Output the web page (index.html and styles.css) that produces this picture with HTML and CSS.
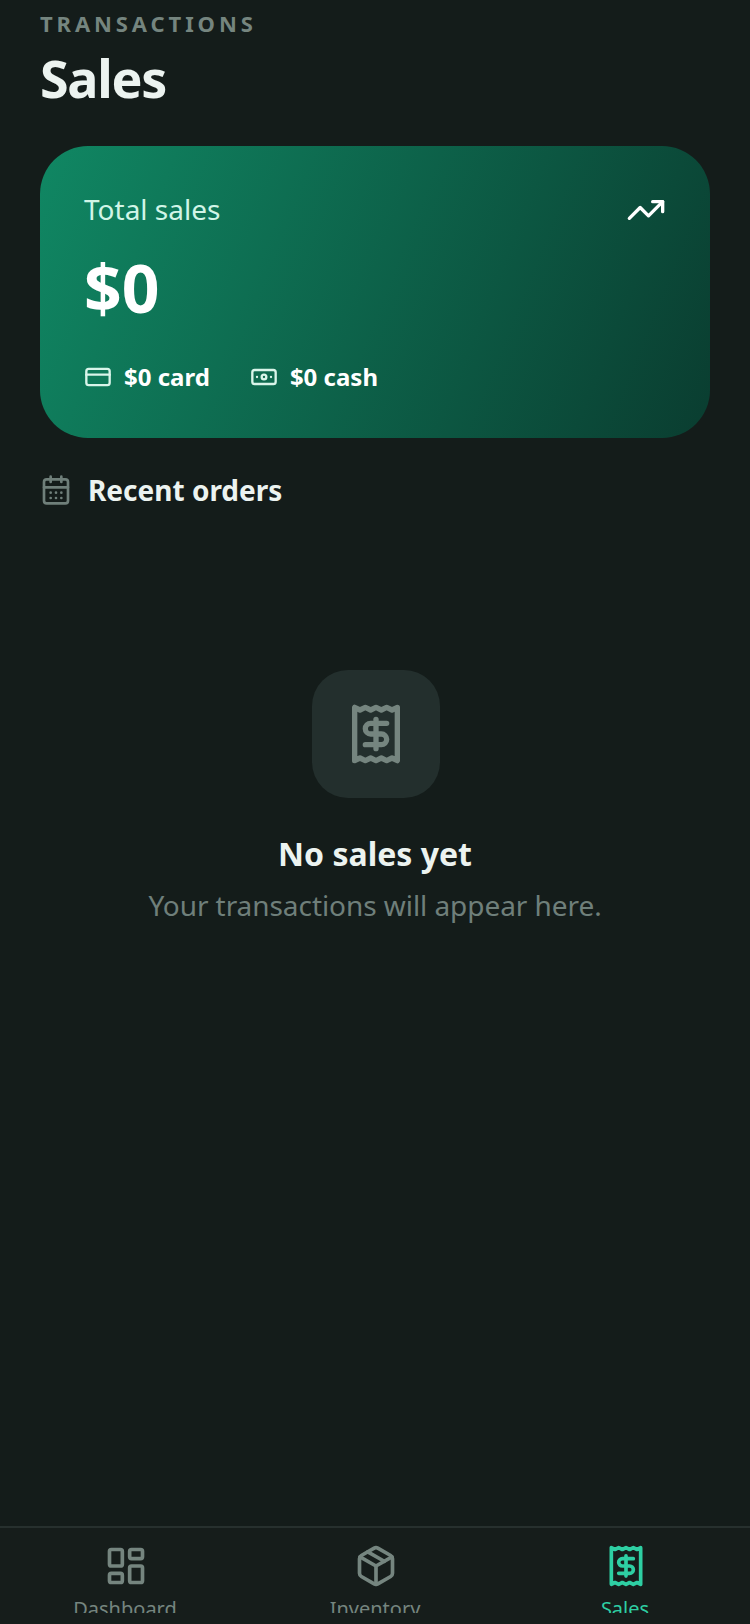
FILE: index.html
```html
<!DOCTYPE html>
<html lang="en">

<head>
    <meta charset="UTF-8">
    <meta name="viewport" content="width=device-width, initial-scale=1.0">
    <title>Sales</title>
    <link rel="stylesheet" href="styles.css">
</head>

<body>
    <div class="screen">
        <main class="content">
            <p class="eyebrow">TRANSACTIONS</p>
            <h1>Sales</h1>

            <section class="total-card">
                <div class="total-top">
                    <span class="total-label">Total sales</span>
                    <svg class="trend-icon" viewBox="0 0 24 24" fill="none" stroke="currentColor" stroke-width="2" stroke-linecap="round" stroke-linejoin="round">
                        <path d="M22 7l-8.500 8.500-5-5L2 17" />
                        <path d="M16 7h6v6" />
                    </svg>
                </div>
                <div class="total-value">$0</div>
                <div class="total-split">
                    <div class="split-item">
                        <svg class="split-icon" viewBox="0 0 24 24" fill="none" stroke="currentColor" stroke-width="2" stroke-linecap="round" stroke-linejoin="round">
                            <rect x="2" y="5" width="20" height="14" rx="2" />
                            <path d="M2 10h20" />
                        </svg>
                        <span>$0 card</span>
                    </div>
                    <div class="split-item">
                        <svg class="split-icon" viewBox="0 0 24 24" fill="none" stroke="currentColor" stroke-width="2" stroke-linecap="round" stroke-linejoin="round">
                            <rect x="2" y="6" width="20" height="12" rx="2" />
                            <circle cx="12" cy="12" r="2" />
                            <path d="M6 12h.01M18 12h.01" />
                        </svg>
                        <span>$0 cash</span>
                    </div>
                </div>
            </section>

            <div class="section-head">
                <svg class="calendar-icon" viewBox="0 0 24 24" fill="none" stroke="currentColor" stroke-width="2" stroke-linecap="round" stroke-linejoin="round">
                    <rect x="3" y="4" width="18" height="18" rx="2" />
                    <path d="M8 2v4M16 2v4M3 10h18" />
                    <path d="M8 14h.01M12 14h.01M16 14h.01M8 18h.01M12 18h.01M16 18h.01" />
                </svg>
                <h2>Recent orders</h2>
            </div>

            <div class="empty">
                <div class="empty-badge">
                    <svg class="receipt-icon" viewBox="0 0 24 24" fill="none" stroke="currentColor" stroke-width="2" stroke-linecap="round" stroke-linejoin="round">
                        <path d="M4 2v20l2-1 2 1 2-1 2 1 2-1 2 1 2-1 2 1V2l-2 1-2-1-2 1-2-1-2 1-2-1-2 1z" />
                        <path d="M16 8h-6a2 2 0 1 0 0 4h4a2 2 0 1 1 0 4H8" />
                        <path d="M12 17.500v-11" />
                    </svg>
                </div>
                <h3>No sales yet</h3>
                <p>Your transactions will appear here.</p>
            </div>
        </main>

        <nav class="tabbar">
            <div class="tab">
                <svg class="tab-icon" viewBox="0 0 24 24" fill="none" stroke="currentColor" stroke-width="2" stroke-linecap="round" stroke-linejoin="round">
                    <rect x="3" y="3" width="7" height="9" rx="1" />
                    <rect x="14" y="3" width="7" height="5" rx="1" />
                    <rect x="14" y="12" width="7" height="9" rx="1" />
                    <rect x="3" y="16" width="7" height="5" rx="1" />
                </svg>
                <span class="tab-label">Dashboard</span>
            </div>
            <div class="tab">
                <svg class="tab-icon" viewBox="0 0 24 24" fill="none" stroke="currentColor" stroke-width="2" stroke-linecap="round" stroke-linejoin="round">
                    <path d="M11 21.730a2 2 0 0 0 2 0l7-4A2 2 0 0 0 21 16V8a2 2 0 0 0-1-1.730l-7-4a2 2 0 0 0-2 0l-7 4A2 2 0 0 0 3 8v8a2 2 0 0 0 1 1.730z" />
                    <path d="M12 22V12" />
                    <path d="M3.290 7L12 12l8.710-5" />
                    <path d="M7.500 4.270l9 5.150" />
                </svg>
                <span class="tab-label">Inventory</span>
            </div>
            <div class="tab active">
                <svg class="tab-icon" viewBox="0 0 24 24" fill="none" stroke="currentColor" stroke-width="2" stroke-linecap="round" stroke-linejoin="round">
                    <path d="M4 2v20l2-1 2 1 2-1 2 1 2-1 2 1 2-1 2 1V2l-2 1-2-1-2 1-2-1-2 1-2-1-2 1z" />
                    <path d="M16 8h-6a2 2 0 1 0 0 4h4a2 2 0 1 1 0 4H8" />
                    <path d="M12 17.500v-11" />
                </svg>
                <span class="tab-label">Sales</span>
            </div>
        </nav>
    </div>
</body>

</html>
```

FILE: styles.css
```css
* {
    margin: 0;
    padding: 0;
    box-sizing: border-box;
    font-family: "Noto Sans", sans-serif;
}

body {
    background: #141c1a;
}

.screen {
    display: flex;
    flex-direction: column;
    width: 750px;
    height: 1624px;
    overflow: hidden;
}

.content {
    flex: 1;
    min-height: 0;
    padding: 7px 40px 0;
}

.eyebrow {
    font-size: 22px;
    line-height: 32px;
    font-weight: 700;
    letter-spacing: 3.9px;
    color: #75857f;
}

h1 {
    margin-top: 7px;
    font-size: 52px;
    line-height: 64px;
    font-weight: 700;
    letter-spacing: -1.3px;
    color: #ecf3f0;
}

.total-card {
    height: 292px;
    margin-top: 36px;
    padding: 44px;
    border-radius: 48px;
    background: linear-gradient(112deg, #108763 0%, #0a3d30 100%);
    color: #fff;
}

.total-top {
    display: flex;
    justify-content: space-between;
    align-items: flex-start;
    height: 40px;
}

.total-label {
    font-size: 28px;
    line-height: 38px;
    color: #d1f5e7;
}

.trend-icon {
    width: 40px;
    height: 40px;
}

.total-value {
    margin-top: 11px;
    font-size: 66px;
    line-height: 92px;
    font-weight: 700;
}

.total-split {
    display: flex;
    gap: 40px;
    margin-top: 26px;
}

.split-item {
    display: flex;
    align-items: center;
    gap: 12px;
    font-size: 24px;
    line-height: 36px;
    font-weight: 700;
}

.split-icon {
    width: 28px;
    height: 28px;
    color: #d9f5ea;
}

.section-head {
    display: flex;
    align-items: center;
    gap: 16px;
    margin-top: 32px;
}

.calendar-icon {
    width: 32px;
    height: 32px;
    color: #6f7f7a;
}

h2 {
    font-size: 28px;
    line-height: 40px;
    font-weight: 700;
    color: #ecf3f0;
}

.empty {
    display: flex;
    flex-direction: column;
    align-items: center;
    margin-top: 160px;
}

.empty-badge {
    display: flex;
    align-items: center;
    justify-content: center;
    width: 128px;
    height: 128px;
    margin-left: 2px;
    border-radius: 36px;
    background: #232f2d;
    color: #75857f;
}

.receipt-icon {
    width: 64px;
    height: 64px;
}

h3 {
    margin-top: 32px;
    font-size: 32px;
    line-height: 48px;
    font-weight: 700;
    color: #ecf3f0;
}

.empty p {
    margin-top: 3px;
    font-size: 28px;
    line-height: 48px;
    letter-spacing: -0.06px;
    color: #6f7f7a;
}

.tabbar {
    display: flex;
    flex-shrink: 0;
    height: 98px;
    border-top: 2px solid #27302e;
    background: #161d1b;
}

.tab {
    flex: 1;
    display: flex;
    flex-direction: column;
    align-items: center;
    height: 85px;
    padding-top: 16px;
    overflow: hidden;
    color: #75857f;
}

.tab.active {
    color: #2ecfa3;
}

.tab-icon {
    width: 44px;
    height: 44px;
    margin-left: 2px;
    flex-shrink: 0;
}

.tab-label {
    margin-top: 7px;
    font-size: 20px;
    line-height: 28px;
}
```
